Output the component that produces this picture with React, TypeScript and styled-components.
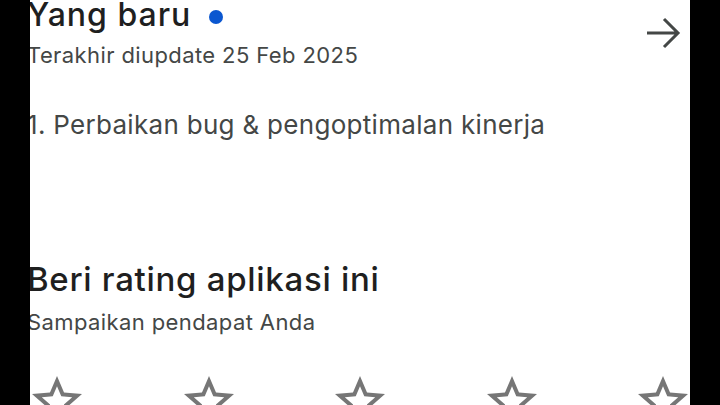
import React from "react";
import styled, { createGlobalStyle } from "styled-components";

const Global = createGlobalStyle`
  html, body { margin: 0; padding: 0; background: #000; }
  body { width: 720px; height: 405px; overflow: hidden; font-family: Inter, "Noto Sans", sans-serif; }
`;

const Screen = styled.div`
  position: relative;
  width: 720px;
  height: 405px;
  background: #fff;
  overflow: hidden;
`;

const Bar = styled.div<{ $side: "left" | "right" }>`
  position: absolute;
  top: 0;
  bottom: 0;
  width: 30px;
  background: #000;
  ${(p) => (p.$side === "left" ? "left: 0;" : "right: 0;")}
  z-index: 2;
`;

const Content = styled.div`
  display: flex;
  flex-direction: column;
  padding: 0 27px;
  width: 666px;
`;

const HeaderRow = styled.div`
  display: flex;
  justify-content: space-between;
  align-items: flex-start;
`;

const TitleBlock = styled.div`
  display: flex;
  flex-direction: column;
`;

const TitleLine = styled.div`
  display: flex;
  align-items: center;
  gap: 18px;
  margin-top: -3px;
`;

const Title = styled.h2<{ $size: number; $ls: number }>`
  margin: 0;
  font-size: ${(p) => p.$size}px;
  letter-spacing: ${(p) => p.$ls}px;
  font-weight: 500;
  color: #1f1f1f;
  line-height: ${(p) => (p.$size > 32 ? 40 : 36)}px;
`;

const Dot = styled.span`
  width: 14px;
  height: 14px;
  margin-top: 4px;
  border-radius: 50%;
  background: #0b57d0;
`;

const Sub = styled.div<{ $top: number }>`
  font-size: 22px;
  letter-spacing: 0.4px;
  color: #444746;
  line-height: 28px;
  margin-top: ${(p) => p.$top}px;
`;

const Body = styled.p`
  margin: 40px 0 0;
  font-size: 26px;
  letter-spacing: 0.3px;
  color: #444746;
  line-height: 32px;
`;

const ArrowBtn = styled.div`
  width: 48px;
  height: 48px;
  margin-top: 9px;
  margin-right: 6px;
  color: #444746;
`;

const Section2 = styled.div`
  margin-top: 118px;
  display: flex;
  flex-direction: column;
`;

const Stars = styled.div`
  display: flex;
  justify-content: space-between;
  margin-top: 35px;
  color: #767676;
`;

const Star = () => (
  <svg width="60" height="60" viewBox="0 0 24 24" fill="currentColor">
    <path d="M22 9.24l-7.19-.62L12 2 9.19 8.63 2 9.24l5.46 4.73L5.82 21 12 17.27 18.18 21l-1.63-7.03L22 9.24zM12 15.4l-3.76 2.27 1-4.28-3.32-2.88 4.38-.38L12 6.1l1.71 4.04 4.38.38-3.32 2.88 1 4.28L12 15.4z" />
  </svg>
);

export default function App() {
  return (
    <>
      <Global />
      <Screen>
        <Bar $side="left" />
        <Bar $side="right" />
        <Content>
          <HeaderRow>
            <TitleBlock>
              <TitleLine>
                <Title $size={32} $ls={1}>Yang baru</Title>
                <Dot />
              </TitleLine>
              <Sub $top={8}>Terakhir diupdate 25 Feb 2025</Sub>
            </TitleBlock>
            <ArrowBtn>
              <svg width="48" height="48" viewBox="0 0 24 24" fill="none" stroke="currentColor" strokeWidth="1.5">
                <path d="M4 12h15.5M12.5 5l7 7-7 7" />
              </svg>
            </ArrowBtn>
          </HeaderRow>
          <Body>1. Perbaikan bug &amp; pengoptimalan kinerja</Body>
          <Section2>
            <Title $size={33} $ls={0.7}>Beri rating aplikasi ini</Title>
            <Sub $top={9}>Sampaikan pendapat Anda</Sub>
          </Section2>
          <Stars>
            <Star />
            <Star />
            <Star />
            <Star />
            <Star />
          </Stars>
        </Content>
      </Screen>
    </>
  );
}
